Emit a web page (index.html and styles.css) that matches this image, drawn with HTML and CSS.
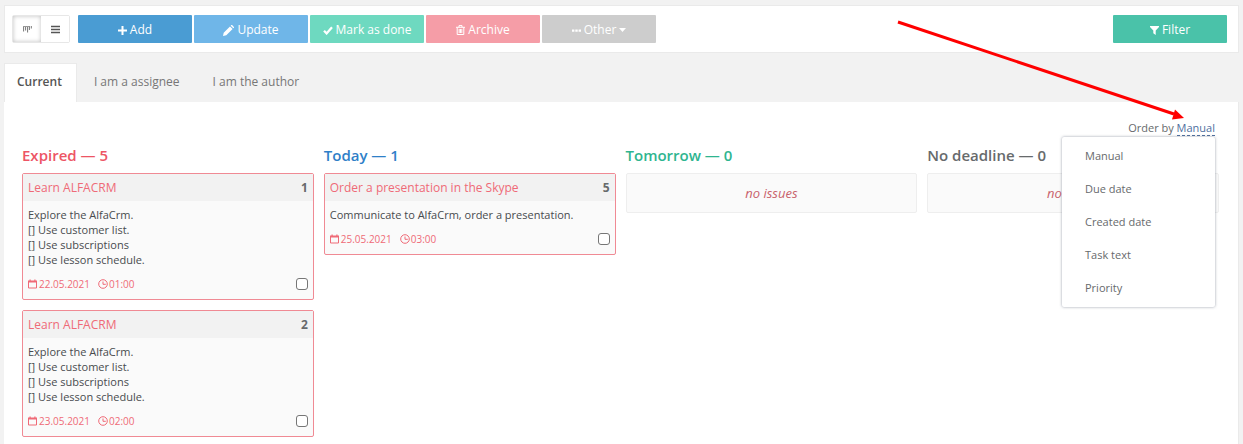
FILE: index.html
```html
<!DOCTYPE html>
<html lang="en">
<head>
  <meta charset="UTF-8">
  <meta name="viewport" content="width=device-width, initial-scale=1.0">
  <title>Tasks</title>
  <link rel="stylesheet" href="styles.css">
</head>
<body>
  <!-- icons -->
  <svg class="sprite" aria-hidden="true">
    <symbol id="i-calendar" viewBox="0 0 10 10">
      <path d="M.5 2.500h8v6.500h-8z" fill="none" stroke="currentColor"/>
      <path d="M0 1.500h9v2H0zM1.500 .5h1.200v2H1.500zM6.300 .5h1.200v2H6.300z" fill="currentColor"/>
    </symbol>
    <symbol id="i-clock" viewBox="0 0 10 10">
      <circle cx="5" cy="5" r="4.300" fill="none" stroke="currentColor"/>
      <path d="M5 2.500v2.800h2.800" fill="none" stroke="currentColor"/>
    </symbol>
  </svg>

  <div class="toolbar">
    <div class="view-switch">
      <button class="view-btn active" type="button" aria-label="Board">
        <svg width="9" height="7" viewBox="0 0 9 7"><path d="M.6 0v5.500M2.600 0v4.500M4.600 0v6.500M6.400 0v4M8.300 0v2.500" stroke="#777"/><path d="M0 .5h6.500" stroke="#999"/></svg>
      </button>
      <button class="view-btn" type="button" aria-label="List">
        <svg width="9" height="9" viewBox="0 0 9 9"><path d="M0 1.500h9M0 4.500h9M0 7.500h9" stroke="#555" stroke-width="1.400"/></svg>
      </button>
    </div>
    <div class="actions">
      <button class="btn btn-add" type="button">
        <svg width="9" height="9" viewBox="0 0 9 9"><path d="M4.500 0v9M0 4.500h9" stroke="#fff" stroke-width="2"/></svg>
        Add
      </button>
      <button class="btn btn-update" type="button">
        <svg width="11" height="11" viewBox="0 0 11 11"><path d="M0 11l.7-3.300L7 1.400 9.600 4 3.300 10.300zM7.700.7L8.300.1q.4-.3.8 0l1.800 1.800q.3.400 0 .8l-.6.600z" fill="#fff"/></svg>
        Update
      </button>
      <button class="btn btn-done" type="button">
        <svg width="10" height="9" viewBox="0 0 10 9"><path d="M1 4.800l2.600 2.600L9 1.300" fill="none" stroke="#fff" stroke-width="2.300"/></svg>
        Mark as done
      </button>
      <button class="btn btn-archive" type="button">
        <svg width="9" height="10" viewBox="0 0 9 10"><path d="M0 2.300h9M3 2V.6h3V2M1.200 2.500v7h6.600v-7M3.200 4v4M4.500 4v4M5.800 4v4" fill="none" stroke="#fff"/></svg>
        Archive
      </button>
      <button class="btn btn-other" type="button">
        <svg width="9" height="9" viewBox="0 0 9 9"><path d="M0 3.500h2.400v2.200H0zM3.300 3.500h2.400v2.200H3.300zM6.600 3.500H9v2.200H6.600z" fill="#fff"/></svg>
        Other
        <svg width="7" height="4" viewBox="0 0 7 4"><path d="M0 0h7L3.500 4z" fill="#fff"/></svg>
      </button>
    </div>
    <button class="btn btn-filter" type="button">
      <svg width="9" height="9" viewBox="0 0 9 9"><path d="M0 0h9v1L5.700 4.500V9L3.300 7.200V4.500L0 1z" fill="#fff"/></svg>
      Filter
    </button>
  </div>

  <nav class="tabs">
    <a class="tab active" href="#current">Current</a>
    <a class="tab" href="#assignee">I am a assignee</a>
    <a class="tab" href="#author">I am the author</a>
  </nav>

  <main class="panel">
    <div class="order">
      Order by <a class="order-link" href="#order">Manual</a>
      <div class="order-menu">
        <a href="#manual">Manual</a>
        <a href="#due">Due date</a>
        <a href="#created">Created date</a>
        <a href="#text">Task text</a>
        <a href="#priority">Priority</a>
      </div>
    </div>

    <div class="board">
      <section class="column">
        <h2 class="column-title expired">Expired — 5</h2>
        <article class="card">
          <header class="card-header">
            <a href="#task-1">Learn ALFACRM</a>
            <b>1</b>
          </header>
          <p class="card-text">Explore the AlfaCrm.<br>[] Use customer list.<br>[] Use subscriptions<br>[] Use lesson schedule.</p>
          <footer class="card-footer">
            <svg class="icon"><use href="#i-calendar"/></svg>
            <span class="date">22.05.2021</span>
            <svg class="icon"><use href="#i-clock"/></svg>
            <span>01:00</span>
            <input class="check" type="checkbox" aria-label="Select task 1">
          </footer>
        </article>
        <article class="card">
          <header class="card-header">
            <a href="#task-2">Learn ALFACRM</a>
            <b>2</b>
          </header>
          <p class="card-text">Explore the AlfaCrm.<br>[] Use customer list.<br>[] Use subscriptions<br>[] Use lesson schedule.</p>
          <footer class="card-footer">
            <svg class="icon"><use href="#i-calendar"/></svg>
            <span class="date">23.05.2021</span>
            <svg class="icon"><use href="#i-clock"/></svg>
            <span>02:00</span>
            <input class="check" type="checkbox" aria-label="Select task 2">
          </footer>
        </article>
      </section>

      <section class="column">
        <h2 class="column-title today">Today — 1</h2>
        <article class="card">
          <header class="card-header">
            <a href="#task-5">Order a presentation in the Skype</a>
            <b>5</b>
          </header>
          <p class="card-text">Communicate to AlfaCrm, order a presentation.</p>
          <footer class="card-footer">
            <svg class="icon"><use href="#i-calendar"/></svg>
            <span class="date">25.05.2021</span>
            <svg class="icon"><use href="#i-clock"/></svg>
            <span>03:00</span>
            <input class="check" type="checkbox" aria-label="Select task 5">
          </footer>
        </article>
      </section>

      <section class="column">
        <h2 class="column-title tomorrow">Tomorrow — 0</h2>
        <div class="empty">no issues</div>
      </section>

      <section class="column">
        <h2 class="column-title">No deadline — 0</h2>
        <div class="empty">no issues</div>
      </section>
    </div>
  </main>

  <!-- pointer to the order menu -->
  <svg class="arrow" width="290" height="104" viewBox="0 0 290 104" aria-hidden="true">
    <path d="M2 3L278 95" stroke="#f00" stroke-width="3"/>
    <path d="M288 99L276 100.500L279 90.500z" fill="#f00"/>
  </svg>
</body>
</html>
```
FILE: styles.css
```css
* {
  box-sizing: border-box;
}

body {
  position: relative;
  display: flex;
  flex-direction: column;
  min-height: 100vh;
  margin: 0;
  padding: 5px 4px 0;
  background: #f2f2f2;
  color: #676a6c;
  font-family: "Open Sans", "Noto Sans", sans-serif;
  font-size: 12px;
  line-height: 16px;
}

a {
  color: inherit;
  text-decoration: none;
}

.sprite {
  position: absolute;
  width: 0;
  height: 0;
}

/* Toolbar */
.toolbar {
  display: flex;
  align-items: center;
  padding: 9px 11px 9px 7px;
  background: #fff;
  border: 1px solid #eaeaea;
}

.view-switch {
  display: flex;
  margin-right: 8px;
  border: 1px solid #e7e7e7;
  border-radius: 2px;
}

.view-btn {
  display: flex;
  align-items: center;
  justify-content: center;
  width: 28px;
  height: 26px;
  padding: 0;
  background: #fff;
  border: 0;
}

.view-btn.active {
  box-shadow: inset 0 0 4px rgba(0, 0, 0, .25);
}

.actions {
  display: flex;
  gap: 2px;
}

.btn {
  display: flex;
  align-items: center;
  justify-content: center;
  gap: 3px;
  width: 114px;
  height: 28px;
  padding: 2px 0 0;
  border: 0;
  border-radius: 1px;
  color: #fff;
  font: inherit;
  cursor: pointer;
}

.btn-add { background: #4a9cd3; }
.btn-update { background: #6fb6e8; }
.btn-done { background: #6ed9c0; }
.btn-archive { background: #f59da7; }
.btn-other { background: #cdcdcd; }

.btn-filter {
  margin-left: auto;
  background: #4ac2a9;
}

/* Tabs */
.tabs {
  display: flex;
  gap: 1px;
  margin-top: 10px;
}

.tab {
  padding: 10px 15px 12px;
  border: 1px solid transparent;
  border-bottom: 0;
  color: #777;
}

.tab.active {
  padding: 10px 14px 12px 12px;
  background: #fff;
  border-color: #eaeaea;
  color: #555;
  font-weight: 600;
}

/* Board */
.panel {
  flex: 1;
  padding: 18px 19px 0 18px;
  background: #fff;
  border-right: 1px solid #eaeaea;
}

.order {
  position: relative;
  padding-right: 4px;
  font-size: 11px;
  text-align: right;
}

.order-link {
  color: #4f6f9f;
  border-bottom: 1px dashed #4f6f9f;
}

.order-menu {
  position: absolute;
  top: 17px;
  right: 4px;
  z-index: 2;
  width: 153px;
  padding: 3px 0 2px;
  background: #fff;
  border-radius: 2px;
  box-shadow: 0 0 3px rgba(86, 96, 117, .6);
  text-align: left;
}

.order-menu a {
  display: block;
  padding: 8px 23px 9px;
}

.board {
  display: grid;
  grid-template-columns: repeat(4, 1fr);
  gap: 10px;
}

.column-title {
  margin: 9px 0 8px;
  font-size: 15px;
  font-weight: 600;
  line-height: 20px;
}

.expired { color: #ed5565; }
.today { color: #2f80c8; }
.tomorrow { color: #2fb590; }

.card {
  margin-bottom: 10px;
  background: #fafafa;
  border: 1px solid #f08a94;
  border-radius: 2px;
}

.card-header {
  display: flex;
  justify-content: space-between;
  padding: 6px 5px 5px;
  background: #f2f2f2;
  color: #ef6a77;
}

.card-header b {
  color: #676a6c;
}

.card-text {
  margin: 6px 5px 9px;
  color: #484b4e;
  font-size: 11px;
  line-height: 15px;
}

.card-footer {
  display: flex;
  align-items: center;
  gap: 1px;
  padding: 0 5px 7px;
  color: #ef6a77;
  font-size: 10px;
}

.icon {
  width: 10px;
  height: 10px;
}

.date {
  margin-right: 7px;
}

.check {
  appearance: none;
  width: 12px;
  height: 12px;
  margin: 0 0 0 auto;
  background: #fff;
  border: 1px solid #767676;
  border-radius: 3px;
}

.empty {
  padding: 11px;
  background: #fafafa;
  border: 1px solid #eee;
  border-radius: 2px;
  color: #c9626c;
  font-size: 13px;
  font-style: italic;
  text-align: center;
}

.arrow {
  position: absolute;
  top: 19px;
  right: 57px;
  z-index: 3;
}
```
